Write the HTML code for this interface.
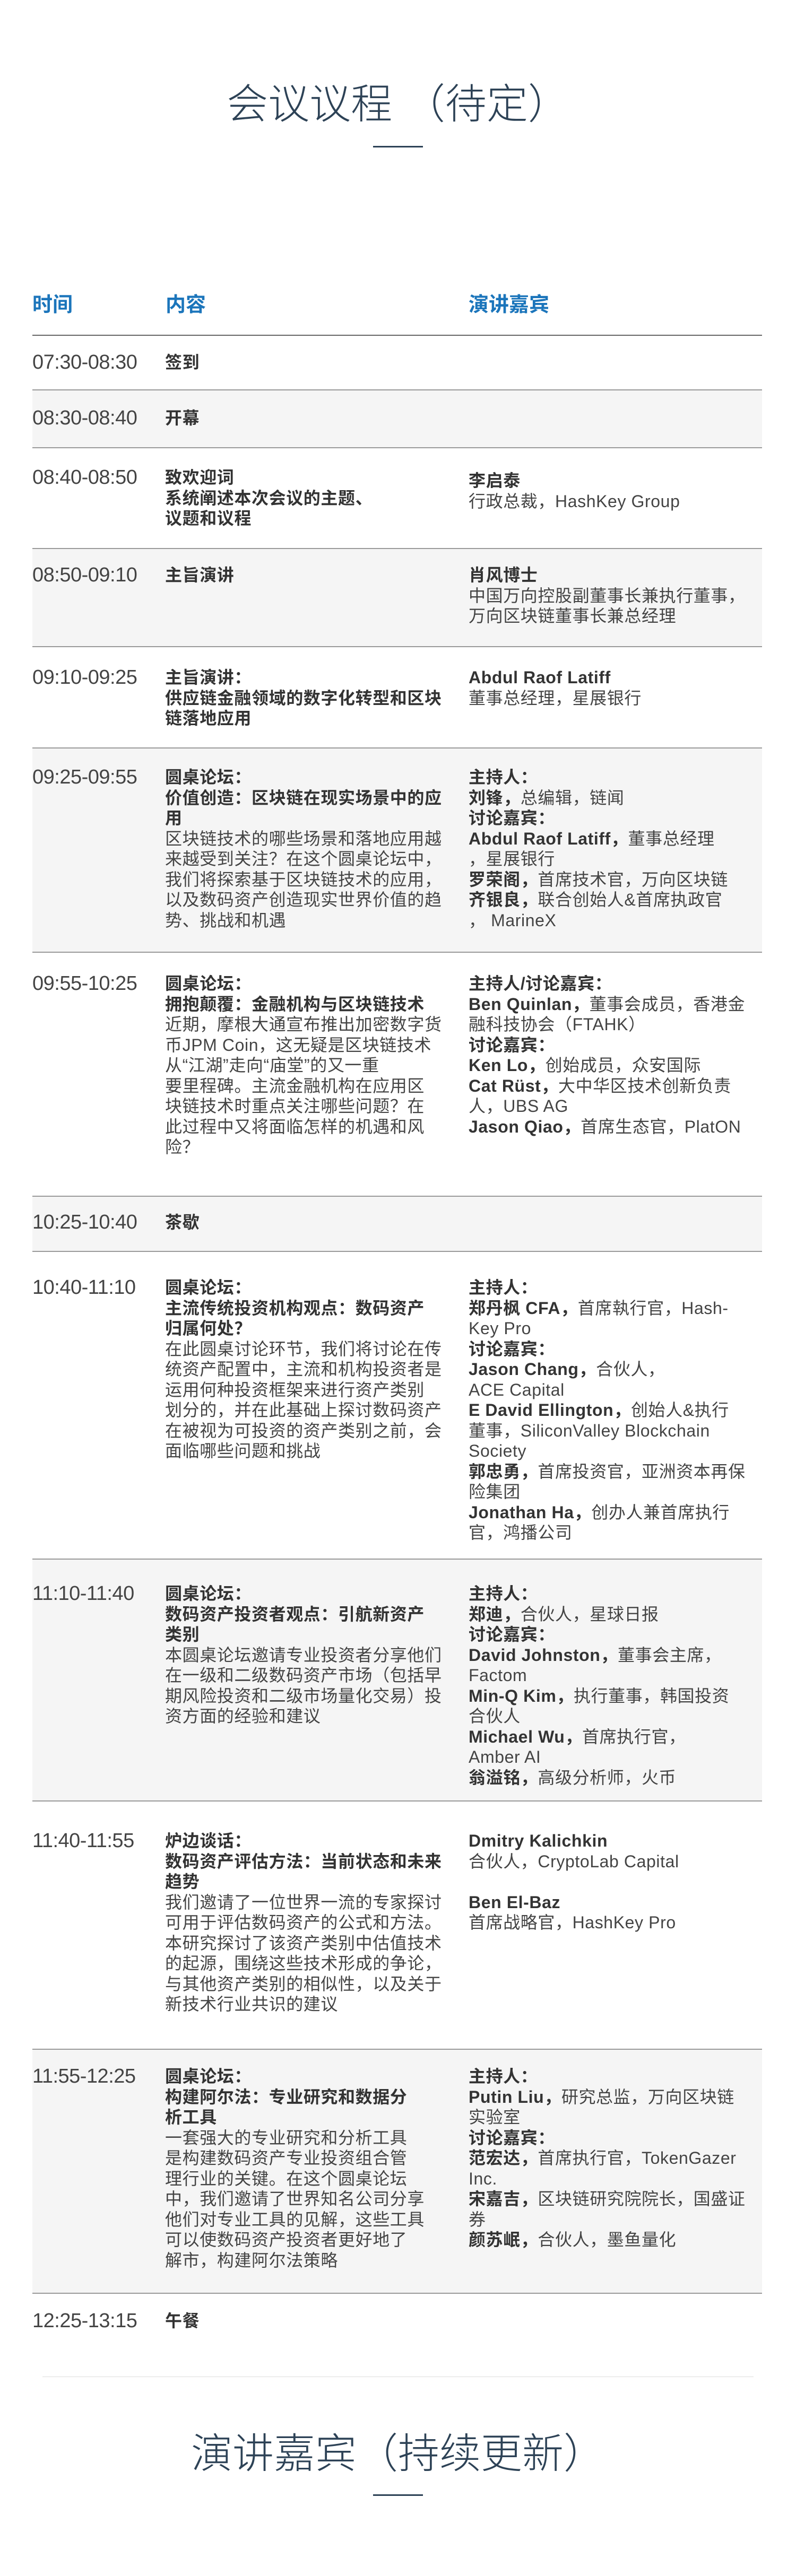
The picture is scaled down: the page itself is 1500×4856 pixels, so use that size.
<!DOCTYPE html>
<html><head><meta charset="utf-8"><style>
body{margin:0;background:#fff;}
#p{position:relative;width:1500px;height:4856px;overflow:hidden;font-family:"Liberation Sans","Noto Sans CJK SC",sans-serif;color:#444;}
.title{position:absolute;left:0;width:1500px;text-align:center;font-family:"Liberation Sans","Noto Sans CJK SC",sans-serif;font-weight:300;font-size:78px;color:#2d4256;line-height:90px;white-space:nowrap;}
.ul{position:absolute;left:703px;width:94px;height:3px;background:#2d4256;}
.h{position:absolute;top:552px;font-size:38px;font-weight:bold;color:#1b75bb;line-height:46px;}
.line{position:absolute;left:61px;width:1375px;height:2px;background:#9a9a9a;}
.row{position:absolute;left:61px;width:1375px;}
.g{background:#f5f5f5;}
.t,.c,.s{position:absolute;white-space:nowrap;line-height:38.5px;}
.t{left:0;font-size:38px;color:#444;letter-spacing:-0.5px;}
.c{left:250px;font-size:32px;letter-spacing:0.6px;}
.s{left:822px;font-size:32px;letter-spacing:0.6px;}
b{color:#333;font-weight:bold;}
</style></head><body><div id="p">
<div class="title" style="top:151px">会议议程 （待定）</div>
<div class="ul" style="top:275px"></div>

<div class="h" style="left:61px">时间</div>
<div class="h" style="left:312px">内容</div>
<div class="h" style="left:883px">演讲嘉宾</div>
<div class="line" style="top:631px;background:#666"></div>

<!-- R1 -->
<div class="row" style="top:633px;height:102px">
<div class="t" style="top:31px">07:30-08:30</div>
<div class="c" style="top:31px"><b>签到</b></div>
</div>
<div class="line" style="top:734px"></div>
<!-- R2 -->
<div class="row g" style="top:736px;height:108px">
<div class="t" style="top:33px">08:30-08:40</div>
<div class="c" style="top:33px"><b>开幕</b></div>
</div>
<div class="line" style="top:843px"></div>
<!-- R3 -->
<div class="row" style="top:845px;height:189px">
<div class="t" style="top:36px">08:40-08:50</div>
<div class="c" style="top:36px"><b>致欢迎词</b><br><b>系统阐述本次会议的主题、</b><br><b>议题和议程</b></div>
<div class="s" style="top:42px"><b>李启泰</b><br>行政总裁，HashKey Group</div>
</div>
<div class="line" style="top:1033px"></div>
<!-- R4 -->
<div class="row g" style="top:1035px;height:184px">
<div class="t" style="top:30px">08:50-09:10</div>
<div class="c" style="top:30px"><b>主旨演讲</b></div>
<div class="s" style="top:30px"><b>肖风博士</b><br>中国万向控股副董事长兼执行董事，<br>万向区块链董事长兼总经理</div>
</div>
<div class="line" style="top:1218px"></div>
<!-- R5 -->
<div class="row" style="top:1220px;height:190px">
<div class="t" style="top:38px">09:10-09:25</div>
<div class="c" style="top:38px"><b>主旨演讲：</b><br><b>供应链金融领域的数字化转型和区块</b><br><b>链落地应用</b></div>
<div class="s" style="top:38px"><b>Abdul Raof Latiff</b><br>董事总经理，星展银行</div>
</div>
<div class="line" style="top:1409px"></div>
<!-- R6 -->
<div class="row g" style="top:1411px;height:384px">
<div class="t" style="top:35px">09:25-09:55</div>
<div class="c" style="top:35px"><b>圆桌论坛：</b><br><b>价值创造：区块链在现实场景中的应</b><br><b>用</b><br>区块链技术的哪些场景和落地应用越<br>来越受到关注？在这个圆桌论坛中，<br>我们将探索基于区块链技术的应用，<br>以及数码资产创造现实世界价值的趋<br>势、挑战和机遇</div>
<div class="s" style="top:35px"><b>主持人：</b><br><b>刘锋，</b>总编辑，链闻<br><b>讨论嘉宾：</b><br><b>Abdul Raof Latiff，</b>董事总经理<br>，星展银行<br><b>罗荣阁，</b>首席技术官，万向区块链<br><b>齐银良，</b>联合创始人&amp;首席执政官<br>， MarineX</div>
</div>
<div class="line" style="top:1794px"></div>
<!-- R7 -->
<div class="row" style="top:1796px;height:459px">
<div class="t" style="top:39px">09:55-10:25</div>
<div class="c" style="top:39px"><b>圆桌论坛：</b><br><b>拥抱颠覆：金融机构与区块链技术</b><br>近期，摩根大通宣布推出加密数字货<br>币JPM Coin，这无疑是区块链技术<br>从“江湖”走向“庙堂”的又一重<br>要里程碑。主流金融机构在应用区<br>块链技术时重点关注哪些问题？在<br>此过程中又将面临怎样的机遇和风<br>险？</div>
<div class="s" style="top:39px"><b>主持人/讨论嘉宾：</b><br><b>Ben Quinlan，</b>董事会成员，香港金<br>融科技协会（FTAHK）<br><b>讨论嘉宾：</b><br><b>Ken Lo，</b>创始成员，众安国际<br><b>Cat Rüst，</b>大中华区技术创新负责<br>人，UBS AG<br><b>Jason Qiao，</b>首席生态官，PlatON</div>
</div>
<div class="line" style="top:2254px"></div>
<!-- R8 -->
<div class="row g" style="top:2256px;height:103px">
<div class="t" style="top:29px">10:25-10:40</div>
<div class="c" style="top:29px"><b>茶歇</b></div>
</div>
<div class="line" style="top:2358px"></div>
<!-- R9 -->
<div class="row" style="top:2360px;height:579px">
<div class="t" style="top:48px">10:40-11:10</div>
<div class="c" style="top:48px"><b>圆桌论坛：</b><br><b>主流传统投资机构观点：数码资产</b><br><b>归属何处？</b><br>在此圆桌讨论环节，我们将讨论在传<br>统资产配置中，主流和机构投资者是<br>运用何种投资框架来进行资产类别<br>划分的，并在此基础上探讨数码资产<br>在被视为可投资的资产类别之前，会<br>面临哪些问题和挑战</div>
<div class="s" style="top:48px"><b>主持人：</b><br><b>郑丹枫 CFA，</b>首席執行官，Hash-<br>Key Pro<br><b>讨论嘉宾：</b><br><b>Jason Chang，</b>合伙人，<br>ACE Capital<br><b>E David Ellington，</b>创始人&amp;执行<br>董事，SiliconValley Blockchain<br>Society<br><b>郭忠勇，</b>首席投资官，亚洲资本再保<br>险集团<br><b>Jonathan Ha，</b>创办人兼首席执行<br>官，鸿播公司</div>
</div>
<div class="line" style="top:2938px"></div>
<!-- R10 -->
<div class="row g" style="top:2940px;height:455px">
<div class="t" style="top:45px">11:10-11:40</div>
<div class="c" style="top:45px"><b>圆桌论坛：</b><br><b>数码资产投资者观点：引航新资产</b><br><b>类别</b><br>本圆桌论坛邀请专业投资者分享他们<br>在一级和二级数码资产市场（包括早<br>期风险投资和二级市场量化交易）投<br>资方面的经验和建议</div>
<div class="s" style="top:45px"><b>主持人：</b><br><b>郑迪，</b>合伙人，星球日报<br><b>讨论嘉宾：</b><br><b>David Johnston，</b>董事会主席，<br>Factom<br><b>Min-Q Kim，</b>执行董事，韩国投资<br>合伙人<br><b>Michael Wu，</b>首席执行官，<br>Amber AI<br><b>翁溢铭，</b>高级分析师，火币</div>
</div>
<div class="line" style="top:3394px"></div>
<!-- R11 -->
<div class="row" style="top:3396px;height:467px">
<div class="t" style="top:55px">11:40-11:55</div>
<div class="c" style="top:55px"><b>炉边谈话：</b><br><b>数码资产评估方法：当前状态和未来</b><br><b>趋势</b><br>我们邀请了一位世界一流的专家探讨<br>可用于评估数码资产的公式和方法。<br>本研究探讨了该资产类别中估值技术<br>的起源，围绕这些技术形成的争论，<br>与其他资产类别的相似性，以及关于<br>新技术行业共识的建议</div>
<div class="s" style="top:55px"><b>Dmitry Kalichkin</b><br>合伙人，CryptoLab Capital<br><br><b>Ben El-Baz</b><br>首席战略官，HashKey Pro</div>
</div>
<div class="line" style="top:3862px"></div>
<!-- R12 -->
<div class="row g" style="top:3864px;height:459px">
<div class="t" style="top:31px">11:55-12:25</div>
<div class="c" style="top:31px"><b>圆桌论坛：</b><br><b>构建阿尔法：专业研究和数据分</b><br><b>析工具</b><br>一套强大的专业研究和分析工具<br>是构建数码资产专业投资组合管<br>理行业的关键。在这个圆桌论坛<br>中，我们邀请了世界知名公司分享<br>他们对专业工具的见解，这些工具<br>可以使数码资产投资者更好地了<br>解市，构建阿尔法策略</div>
<div class="s" style="top:31px"><b>主持人：</b><br><b>Putin Liu，</b>研究总监，万向区块链<br>实验室<br><b>讨论嘉宾：</b><br><b>范宏达，</b>首席执行官，TokenGazer<br>Inc.<br><b>宋嘉吉，</b>区块链研究院院长，国盛证<br>券<br><b>颜苏岷，</b>合伙人，墨鱼量化</div>
</div>
<div class="line" style="top:4322px"></div>
<!-- R13 -->
<div class="row" style="top:4324px;height:120px">
<div class="t" style="top:32px">12:25-13:15</div>
<div class="c" style="top:32px"><b>午餐</b></div>
</div>

<div style="position:absolute;left:80px;top:4480px;width:1340px;height:1px;background:#ddd"></div>
<div class="title" style="top:4580px">演讲嘉宾（持续更新）</div>
<div class="ul" style="top:4702px"></div>
</div></body></html>
